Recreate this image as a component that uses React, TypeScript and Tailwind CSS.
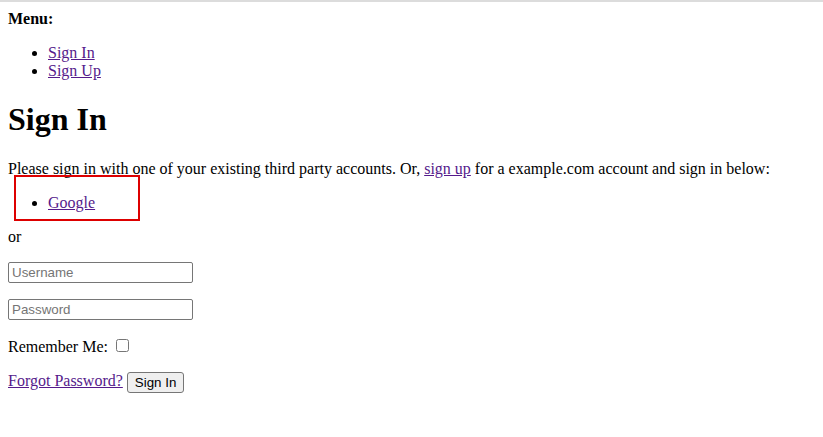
export default function App() {
  return (
    <div className="min-h-[437px] bg-white border-t-2 border-[#dcdcdc] font-['Liberation_Serif',serif] text-[16px] leading-[normal] text-black">
      <div className="m-2">
        <p className="font-bold">Menu:</p>
        <ul className="my-4 pl-10 list-disc">
          <li>
            <a href="#" className="text-[#551a8b] underline">Sign In</a>
          </li>
          <li>
            <a href="#" className="text-[#551a8b] underline">Sign Up</a>
          </li>
        </ul>
        <h1 className="my-[21.44px] text-[32px] font-bold leading-[normal]">Sign In</h1>
        <p>
          Please sign in with one of your existing third party accounts. Or,{" "}
          <a href="#" className="text-[#551a8b] underline">sign up</a> for a example.com account and sign in below:
        </p>
        <div className="relative my-4">
          <ul className="pl-10 list-disc">
            <li>
              <a href="#" className="text-[#551a8b] underline">Google</a>
            </li>
          </ul>
          <div className="absolute left-[6px] top-[-19px] w-[126px] h-[46px] border-2 border-[#dd0000] pointer-events-none" />
        </div>
        <p>or</p>
        <form className="font-['Liberation_Sans',sans-serif]" onSubmit={(e) => e.preventDefault()}>
          <p className="my-4">
            <input
              type="text"
              placeholder="Username"
              className="w-[185px] h-[21px] border border-[#767676] rounded-[2px] px-[3px] text-[13.33px] placeholder:text-[#757575] align-middle"
            />
          </p>
          <p className="my-4">
            <input
              type="password"
              placeholder="Password"
              className="w-[185px] h-[21px] border border-[#767676] rounded-[2px] px-[3px] text-[13.33px] placeholder:text-[#757575] align-middle"
            />
          </p>
          <p className="my-4 font-['Liberation_Serif',serif]">
            Remember Me:{" "}
            <input type="checkbox" className="ml-[4px] mr-[3px] my-[3px] w-[13px] h-[13px] align-baseline" />
          </p>
          <p className="my-4 font-['Liberation_Serif',serif]">
            <a href="#" className="text-[#551a8b] underline">Forgot Password?</a>{" "}
            <button
              type="submit"
              className="font-['Liberation_Sans',sans-serif] text-[13.33px] px-[7px] py-[1px] h-[21px] border border-[#767676] rounded-[3px] bg-[#efefef] align-middle"
            >
              Sign In
            </button>
          </p>
        </form>
      </div>
    </div>
  );
}
